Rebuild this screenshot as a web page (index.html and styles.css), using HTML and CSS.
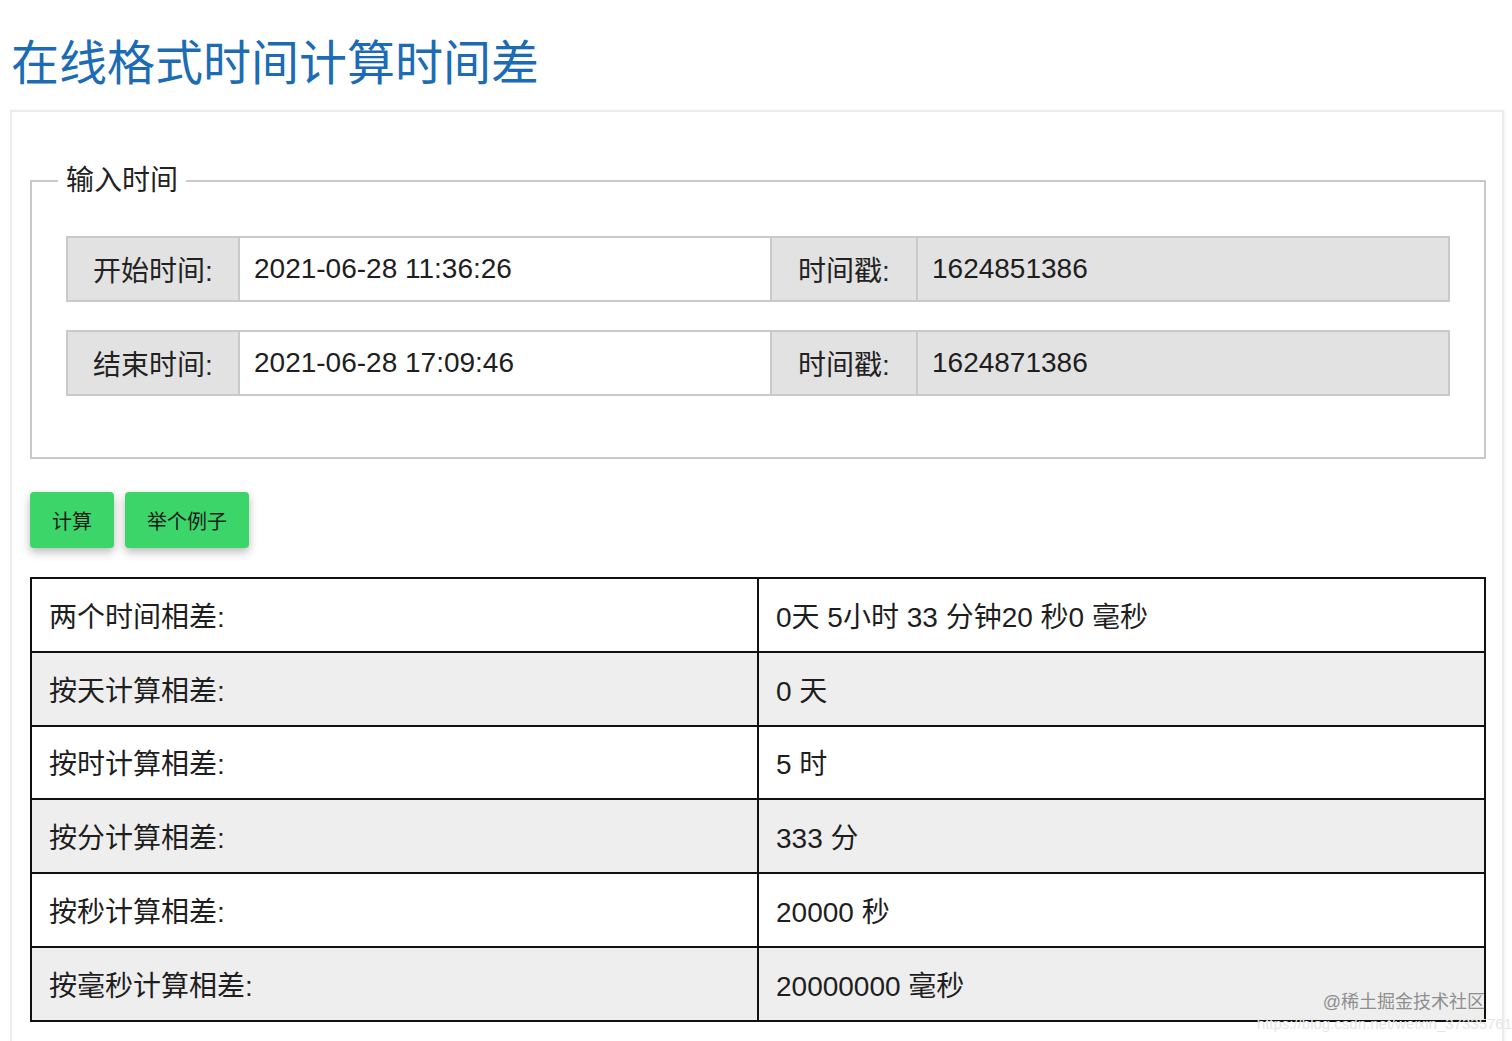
FILE: index.html
```html
<!DOCTYPE html>
<html lang="zh-CN">
<head>
<meta charset="utf-8">
<title>在线格式时间计算时间差</title>
<link rel="stylesheet" href="styles.css">
</head>
<body>
<h1 class="title">在线格式时间计算时间差</h1>
<div class="panel">
  <fieldset class="inputs">
    <legend class="legend">输入时间</legend>
    <div class="row">
      <span class="label">开始时间:</span>
      <input class="field" type="text" value="2021-06-28 11:36:26">
      <span class="label label-ts">时间戳:</span>
      <input class="field field-ro" type="text" value="1624851386" readonly>
    </div>
    <div class="row">
      <span class="label">结束时间:</span>
      <input class="field" type="text" value="2021-06-28 17:09:46">
      <span class="label label-ts">时间戳:</span>
      <input class="field field-ro" type="text" value="1624871386" readonly>
    </div>
  </fieldset>
  <div class="actions">
    <button class="btn" type="button">计算</button>
    <button class="btn" type="button">举个例子</button>
  </div>
  <table class="result">
    <tr><td>两个时间相差:</td><td>0天 5小时 33 分钟20 秒0 毫秒</td></tr>
    <tr><td>按天计算相差:</td><td>0 天</td></tr>
    <tr><td>按时计算相差:</td><td>5 时</td></tr>
    <tr><td>按分计算相差:</td><td>333 分</td></tr>
    <tr><td>按秒计算相差:</td><td>20000 秒</td></tr>
    <tr><td>按毫秒计算相差:</td><td>20000000 毫秒</td></tr>
  </table>
</div>
<div class="watermark">
  <div class="wm-main">@稀土掘金技术社区</div>
  <div class="wm-url">https://blog.csdn.net/weixin_37335761</div>
</div>
</body>
</html>
```

FILE: styles.css
```css
html, body {
  margin: 0;
  padding: 0;
  background: #ffffff;
}
body {
  font-family: "Liberation Sans", "Noto Sans CJK SC", sans-serif;
  color: #1e1e1e;
  overflow: hidden;
  height: 1041px;
  position: relative;
}
.title {
  margin: 40px 0 22px 11px;
  font-size: 48px;
  line-height: 48px;
  font-weight: normal;
  color: #1c6cb5;
}
.panel {
  margin-left: 10px;
  width: 1456px;
  border: 2px solid #ececec;
  border-bottom: none;
  padding: 53px 16px 40px 18px;
  box-shadow: 1px 0 3px rgba(0, 0, 0, 0.06);
}
.inputs {
  margin: 0;
  border: 2px solid #c9c9c9;
  padding: 39px 34px 61px;
}
.legend {
  margin-left: -8px;
  padding: 0 8px;
  font-size: 28px;
  line-height: 32px;
  color: #222;
}
.row {
  display: flex;
  height: 66px;
}
.row + .row {
  margin-top: 28px;
}
.label {
  box-sizing: border-box;
  width: 174px;
  flex: none;
  display: flex;
  align-items: center;
  justify-content: center;
  background: #e2e2e2;
  border: 2px solid #c9c9c9;
  font-size: 28px;
  color: #222;
}
.label-ts {
  width: 148px;
}
.field {
  box-sizing: border-box;
  flex: 1;
  min-width: 0;
  height: 66px;
  margin: 0;
  border: 2px solid #c9c9c9;
  border-left: none;
  border-right: none;
  padding: 0 14px;
  font-family: "Liberation Sans", "Noto Sans CJK SC", sans-serif;
  font-size: 28px;
  color: #1e1e1e;
  background: #ffffff;
  outline: none;
}
.field-ro {
  background: #e2e2e2;
  border-right: 2px solid #c9c9c9;
}
.actions {
  display: flex;
  gap: 11px;
  margin-top: 33px;
}
.btn {
  height: 56px;
  padding: 0 22px;
  border: none;
  border-radius: 4px;
  background: #3bd56a;
  color: #1a1a1a;
  font-family: "Liberation Sans", "Noto Sans CJK SC", sans-serif;
  font-size: 20px;
  box-shadow: 0 4px 10px rgba(0, 0, 0, 0.28);
}
.result {
  margin-top: 29px;
  width: 100%;
  border-collapse: collapse;
  table-layout: fixed;
  border: 2px solid #111;
}
.result td {
  height: 71.8px;
  padding: 0 17px;
  border: 2px solid #111;
  font-size: 28px;
  color: #1e1e1e;
  vertical-align: middle;
}
.result tr:nth-child(even) td {
  background: #eeeeee;
}
.watermark {
  position: absolute;
  right: 0;
  top: 990px;
  text-align: right;
}
.wm-main {
  margin-right: 27px;
  font-size: 18px;
  line-height: 24px;
  color: #8e8e8e;
}
.wm-url {
  margin-right: 0;
  font-size: 15px;
  line-height: 20px;
  color: #e6e6e6;
}
```
